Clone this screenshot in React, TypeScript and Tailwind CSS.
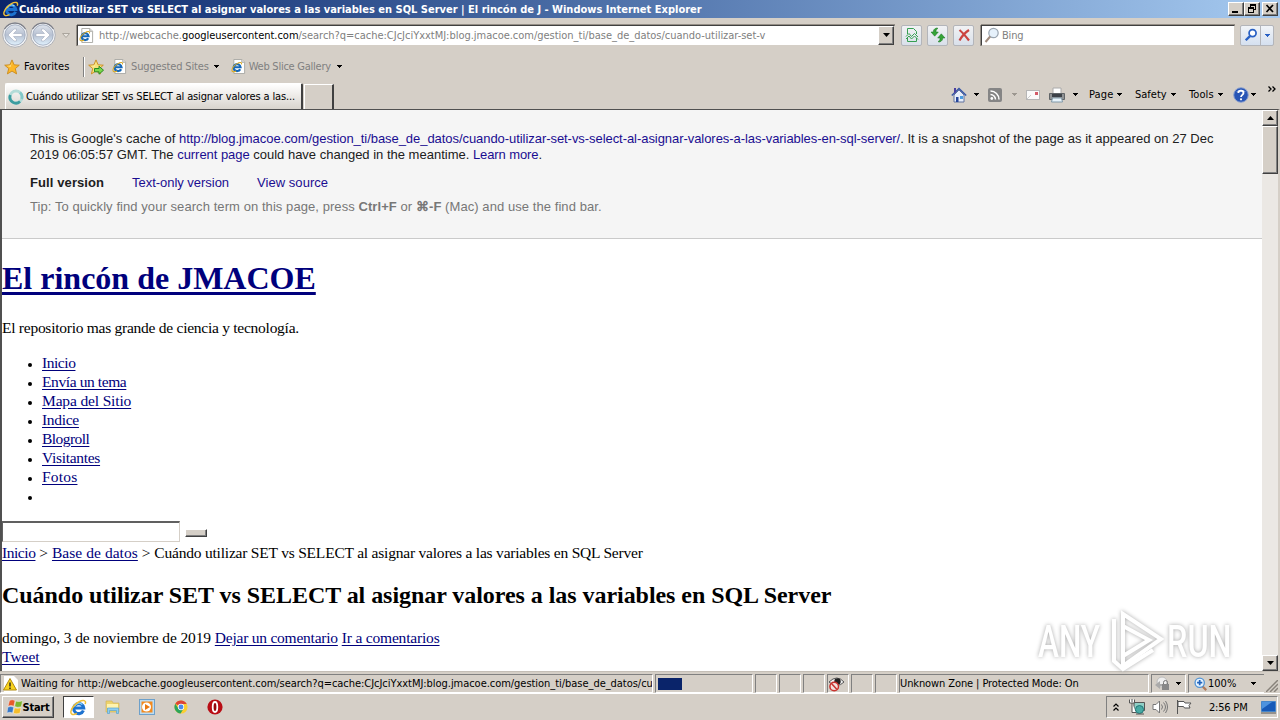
import type { ReactNode } from "react";

const menu = [
  { label: "Inicio", tracking: "tracking-[-0.45px]" },
  { label: "Envía un tema", tracking: "tracking-[-0.4px]" },
  { label: "Mapa del Sitio", tracking: "tracking-[-0.15px]" },
  { label: "Indice", tracking: "tracking-[-0.3px]" },
  { label: "Blogroll", tracking: "tracking-[-0.54px]" },
  { label: "Visitantes", tracking: "tracking-[-0.3px]" },
  { label: "Fotos", tracking: "tracking-[0.2px]" },
  { label: "", tracking: "" },
];

function IeLogo({ className }: { className: string }) {
  return (
    <svg viewBox="0 0 16 16" className={className}>
      <path d="M12.6 10.8A4.700 4.700 0 1 1 12.900 8.500H5" fill="none" stroke="#1d72cf" strokeWidth="2.900" />
      <path d="M4.2 7A4.300 4.300 0 0 1 11.500 5.300" fill="none" stroke="#8ad4fb" strokeWidth="1.300" />
      <path d="M14.3 4.800C15.600 1.300 12.500.3 8.500 2.600 5 4.600 1.900 8.200 1 11.200.2 14.200 2.500 15.800 6.500 13.600" fill="none" stroke="#f0bf35" strokeWidth="1.400" />
    </svg>
  );
}

function PageIcon({ className }: { className: string }) {
  return (
    <svg viewBox="0 0 16 16" className={className}>
      <path d="M3 .5h8.500l3 3v12H3z" fill="#fff" stroke="#a9a9a4" />
      <path d="M11.500.5v3h3" fill="#e4e4e4" stroke="#a9a9a4" />
      <path d="M9.800 10.900A3.700 3.700 0 1 1 10.200 8.800H4" fill="none" stroke="#1668b8" strokeWidth="2.300" />
      <path d="M11.200 5.700C11.800 3.300 9.200 3.200 6.500 5 3.500 7 1 10 1 12c0 2 2 2.200 4.500.8" fill="none" stroke="#dba922" strokeWidth="1.100" />
    </svg>
  );
}

function Star({ arrow }: { arrow?: boolean }) {
  return (
    <svg viewBox="0 0 16 16" className="size-4 shrink-0">
      <path d="M8 .9l2.100 4.900 5.200.4-4 3.400 1.300 5.300L8 12.100l-4.600 2.800 1.300-5.300-4-3.400 5.200-.4z" fill={arrow ? "#f7e27a" : "#fdb728"} stroke="#c98a1c" strokeWidth=".9" />
      <path d="M8 2.600L6.600 6.500l-3.800.5 3.800.800z" fill="#fff3a8" />
      {arrow && <path d="M6.500 9.500h4.500V7.200l4.500 4-4.500 4v-2.400H6.500z" fill="#7bd84c" stroke="#2b8a22" />}
    </svg>
  );
}

function Caret({ className = "fill-black" }: { className?: string }) {
  return (
    <svg viewBox="0 0 5 3" className={`w-[5px] h-[3px] shrink-0 ${className}`} shapeRendering="crispEdges">
      <path d="M0 0h5v1H4v1H3v1H2V2H1V1H0z" />
    </svg>
  );
}

function NavArrow({ back }: { back?: boolean }) {
  return (
    <svg viewBox="0 0 26 26" className="size-[26px] shrink-0">
      <defs>
        <linearGradient id="nav" x2="0" y2="1">
          <stop offset="0" stopColor="#dfe4ec" />
          <stop offset=".5" stopColor="#b7c1d2" />
          <stop offset="1" stopColor="#e0f1fd" />
        </linearGradient>
      </defs>
      <circle cx="13" cy="13" r="12.300" fill="#f1f3f6" stroke="#aeb0b6" strokeWidth="1" />
      <path d="M2.500 7A12.300 12.300 0 0 1 23.500 7" fill="none" stroke="#7b7d86" strokeWidth="1.200" />
      <circle cx="13" cy="13" r="10.200" fill="url(#nav)" stroke="#9aa6ba" strokeWidth=".8" />
      <path
        d="M6 13l6-6h2.500v1.500L11.500 11.500H20v3h-8.500l3 3V19H12z"
        fill="#fff"
        stroke="#98a3b6"
        strokeWidth=".5"
        transform={back ? undefined : "rotate(180 13 13)"}
      />
    </svg>
  );
}

function ToolButton({ children }: { children: ReactNode }) {
  return (
    <div className="w-[21px] h-[21px] mr-[5px] shrink-0 rounded-[2px] border border-[#b3b5ba] bg-linear-to-b from-[#f1f2f4] to-[#d9e0ea] flex items-center justify-center">
      {children}
    </div>
  );
}

function WinButton({ children, className = "" }: { children?: ReactNode; className?: string }) {
  return (
    <div className={`shrink-0 bg-[#d5cfc7] border border-t-white border-l-white border-r-[#404040] border-b-[#404040] shadow-[inset_-1px_-1px_#808080] flex items-center justify-center ${className}`}>
      {children}
    </div>
  );
}

function Panel({ children, className }: { children?: ReactNode; className: string }) {
  return (
    <div className={`h-[19px] shrink-0 border border-t-[#808080] border-l-[#808080] border-r-white border-b-white flex items-center overflow-hidden whitespace-nowrap ${className}`}>
      {children}
    </div>
  );
}

function TitleBar() {
  return (
    <div className="h-[18px] flex items-center bg-linear-to-r from-[#0a246a] to-[#a6caf0] text-white font-bold">
      <IeLogo className="size-4 ml-[3px]" />
      <span>
        Cuándo utilizar SET vs SELECT al asignar valores a las variables en SQL Server | El rincón de J - Windows Internet Explorer
      </span>
      <div className="ml-auto mr-[2px] flex">
        <WinButton className="w-4 h-[14px]">
          <svg viewBox="0 0 14 12" className="w-[14px] h-3"><path d="M3 8h6v2H3z" /></svg>
        </WinButton>
        <WinButton className="w-4 h-[14px]">
          <svg viewBox="0 0 14 12" className="w-[14px] h-3" shapeRendering="crispEdges">
            <path d="M5 1h6v6H9V6h1V3H6v1H5zM3 4h6v6H3zm1 2v3h4V6z" fillRule="evenodd" />
          </svg>
        </WinButton>
        <WinButton className="w-4 h-[14px] ml-[2px]">
          <svg viewBox="0 0 14 12" className="w-[14px] h-3"><path d="M3.500 2l6.500 7M10 2L3.500 9" stroke="#000" strokeWidth="1.700" /></svg>
        </WinButton>
      </div>
    </div>
  );
}

function AddressRow() {
  return (
    <div className="h-[34px] flex items-center pl-[2px]">
      <NavArrow back />
      <div className="w-[2px]" />
      <NavArrow />
      <div className="w-[21px] pl-[6px]">
        <svg viewBox="0 0 8 5" className="w-2 h-[5px]"><path d="M.5.5h7L4 4.500z" fill="#e8e4de" stroke="#aaa59d" /></svg>
      </div>
      <div className="w-[818px] h-[21px] mr-[6px] bg-white border border-t-[#404040] border-l-[#404040] border-r-[#d5cfc7] border-b-[#d5cfc7] shadow-[0_-1px_#948e86,-1px_0_#948e86] flex items-center whitespace-nowrap">
        <PageIcon className="size-[15px] ml-px" />
        <span className="ml-[5px] text-[#808080] tracking-[-0.02px]">
          http://webcache.<span className="text-black">googleusercontent.com</span>/search?q=cache:CJcJciYxxtMJ:blog.jmacoe.com/gestion_ti/base_de_datos/cuando-utilizar-set-v
        </span>
        <WinButton className="w-4 h-[19px] ml-auto"><svg viewBox="0 0 7 4" className="w-[7px] h-1"><path d="M0 0h7L3.500 4z" /></svg></WinButton>
      </div>
      <ToolButton>
        <svg viewBox="0 0 16 16" className="size-4" fill="none" stroke="#36a052">
          <path d="M3.500 7V1.500h6l3 3V7M3.500 11v3.500h9V11" />
          <path d="M2 9.500l3-3 2.500 3 3-3 3.500 3.500M2 12l3-3 2.500 3 3-3 3.500 3.500" />
        </svg>
      </ToolButton>
      <ToolButton>
        <svg viewBox="0 0 16 16" className="size-4" fill="#36a338" stroke="#187722" strokeWidth=".5">
          <path d="M6.500 1C3.800 1.800 3.300 3.500 3.300 5H1l3.700 4.200L8.300 5H6c0-1.500 0-2.500 2-3.700z" />
          <path d="M9.500 15c2.700-.8 3.200-2.500 3.200-4H15l-3.700-4.200L7.700 11H10c0 1.500 0 2.500-2 3.700z" />
        </svg>
      </ToolButton>
      <ToolButton>
        <svg viewBox="0 0 16 16" className="size-4"><path d="M3.500 3c3 2.500 6 6 9.500 10.500M13 3C9 5.500 6 9 3.500 13.500" fill="none" stroke="#cb4340" strokeWidth="2.200" /></svg>
      </ToolButton>
      <div className="w-[254px] h-[21px] ml-[2px] bg-white border border-t-[#404040] border-l-[#404040] border-r-[#d5cfc7] border-b-[#d5cfc7] shadow-[0_-1px_#948e86,-1px_0_#948e86] flex items-center text-[#808080]">
        <svg viewBox="0 0 16 16" className="size-4 ml-[2px]">
          <circle cx="9.500" cy="6" r="4.700" fill="#e6f1fb" stroke="#9aa5b0" strokeWidth="1.200" />
          <path d="M6.200 9.500L1.500 15" stroke="#a08b7d" strokeWidth="2" />
        </svg>
        <span className="ml-[2px] tracking-[-0.2px]">Bing</span>
      </div>
      <div className="h-[21px] ml-[5px] flex rounded-[2px] border border-[#b3b5ba] bg-linear-to-b from-[#f1f4f8] to-[#d5e0ef]">
        <div className="w-5 border-r border-[#b3b5ba] flex items-center justify-center">
          <svg viewBox="0 0 16 16" className="size-[14px]">
            <circle cx="9.800" cy="5.800" r="4" fill="#fff" stroke="#2860c4" strokeWidth="2" />
            <path d="M6.800 9.200L2 14" stroke="#2860c4" strokeWidth="2.700" />
          </svg>
        </div>
        <div className="w-3 flex items-center justify-center"><Caret className="fill-[#2860c4]" /></div>
      </div>
    </div>
  );
}

function FavoritesRow() {
  return (
    <div className="h-[29px] flex items-center pl-1 text-[#808080]">
      <Star />
      <span className="ml-1 w-[59px] text-black tracking-[0.1px]">Favorites</span>
      <div className="w-[2px] h-5 mr-[3px] bg-white border-l border-[#808080]" />
      <Star arrow />
      <PageIcon className="size-[15px] ml-[8px]" />
      <span className="ml-[4px] mr-[5px] tracking-[-0.15px]">Suggested Sites</span>
      <Caret />
      <PageIcon className="size-[15px] ml-[12px]" />
      <span className="ml-[3px] mr-[6px] tracking-[-0.25px]">Web Slice Gallery</span>
      <Caret />
    </div>
  );
}

function TabRow() {
  return (
    <div className="h-7 flex">
      <div className="w-[298px] h-[26px] mt-[2px] ml-[5px] pl-[2px] rounded-t-[2px] bg-linear-to-b from-white to-[#d9d4cd] border-t border-l border-white border-r-2 border-r-[#404040] flex items-center whitespace-nowrap">
        <svg viewBox="0 0 16 16" className="size-4 shrink-0" fill="none" strokeWidth="2.800">
          <circle cx="8" cy="8" r="6" stroke="#b3dcd8" />
          <path d="M2.300 6A6 6 0 0 0 12 12.500" stroke="#3c9da0" />
          <path d="M12 3.500A6 6 0 0 1 13.700 10" stroke="#82c8c8" />
        </svg>
        <span className="ml-[2px] tracking-[-0.15px]">Cuándo utilizar SET vs SELECT al asignar valores a las...</span>
      </div>
      <div className="w-[30px] h-[25px] mt-[3px] ml-[1px] border-t border-l border-white border-r-2 border-r-[#404040]" />
      <div className="ml-auto flex items-center h-[27px] pr-1">
        <svg viewBox="0 0 16 16" className="size-4">
          <path d="M3 8v7h10V8L8 3z" fill="#e8eefa" stroke="#6375a0" />
          <path d="M.8 8.500L8 1.500l7.200 7" fill="none" stroke="#3555a5" strokeWidth="1.500" />
          <path d="M3 1h2v4L3 6.500z" fill="#4a3f9f" /><path d="M5 10h2.500v5H5z" fill="#25459a" /><path d="M9 9h3v3H9z" fill="#4d9de0" />
        </svg>
        <div className="w-[21px] pl-[7px]"><Caret /></div>
        <svg viewBox="0 0 14 14" className="size-[14px]">
          <rect width="14" height="14" rx="2" fill="#858585" />
          <path d="M2.500 6.500a5 5 0 0 1 5 5M2.500 3a8.500 8.500 0 0 1 8.500 8.500" fill="none" stroke="#fff" strokeWidth="1.500" /><circle cx="3.800" cy="10.500" r="1.400" fill="#fff" />
        </svg>
        <div className="w-[24px] pl-[10px]"><Caret className="fill-[#9c9790]" /></div>
        <svg viewBox="0 0 14 10" className="w-[14px] h-[10px]"><rect x=".5" y=".5" width="13" height="9" fill="#fafafa" stroke="#b6b6b6" /><path d="M9 2h3v3H9z" fill="#d35b68" /><path d="M1 9l4-4" stroke="#ccc" /></svg>
        <svg viewBox="0 0 16 16" className="size-4 ml-[9px]">
          <path d="M4 1h8v6H4z" fill="#fff" stroke="#aaa" />
          <path d="M.5 6.500h15v6H.5z" fill="#8f9294" stroke="#606467" /><path d="M3 7h10v3H3z" fill="#3d4248" /><path d="M3.500 11h9l1 4h-11z" fill="#e8f4fb" stroke="#8199a8" />
        </svg>
        <div className="w-[24px] pl-[8px]"><Caret /></div>
        <span className="w-7 tracking-[0.15px]">Page</span><Caret />
        <span className="w-9 ml-[13px]">Safety</span><Caret />
        <span className="w-[29px] ml-[13px] tracking-[0.1px]">Tools</span><Caret />
        <svg viewBox="0 0 16 16" className="size-4 ml-[10px]">
          <circle cx="8" cy="8" r="7.300" fill="#2855b5" stroke="#8fa3cf" /><path d="M3 5a6 5 0 0 1 10 0z" fill="#6f97dd" />
          <path d="M5.300 6C5.500 2.800 10.500 2.800 10.500 6 10.500 7.700 8 8 8 10" fill="none" stroke="#fff" strokeWidth="1.800" /><circle cx="8" cy="12.300" r="1.100" fill="#fff" />
        </svg>
        <div className="w-[19px] pl-[2px]"><Caret /></div>
        <svg viewBox="0 0 8 6" className="w-2 h-[6px] mb-3" fill="none" stroke="#000" strokeWidth="1.300"><path d="M.5.5L3 3 .5 5.500M4.500.5L7 3 4.500 5.500" /></svg>
      </div>
    </div>
  );
}

function ScrollBar() {
  return (
    <div className="w-4 shrink-0 flex flex-col bg-[#ebe8e4]">
      <WinButton className="h-4"><svg viewBox="0 0 7 4" className="w-[7px] h-1"><path d="M0 4h7L3.500 0z" /></svg></WinButton>
      <WinButton className="h-12" />
      <WinButton className="h-4 mt-auto"><svg viewBox="0 0 7 4" className="w-[7px] h-1"><path d="M0 0h7L3.500 4z" /></svg></WinButton>
    </div>
  );
}

function CacheHeader() {
  return (
    <div className="h-[129px] pt-[21px] pl-7 bg-[#f5f5f5] border-b border-[#cacaca] font-['Liberation_Sans',Arial,sans-serif] text-[13px] leading-4 text-[#202020] whitespace-nowrap">
      <p className="tracking-[0.02px]">
        This is Google's cache of <a className="text-[#1a0d91] tracking-[-0.056px]">http://blog.jmacoe.com/gestion_ti/base_de_datos/cuando-utilizar-set-vs-select-al-asignar-valores-a-las-variables-en-sql-server/</a>. It is a snapshot of the page as it appeared on 27 Dec
      </p>
      <p>
        2019 06:05:57 GMT. The <a className="text-[#1a0d91] tracking-[-0.05px]">current page</a> could have changed in the meantime. <a className="text-[#1a0d91] tracking-[-0.1px]">Learn more</a>.
      </p>
      <div className="mt-3 flex text-[#1a0d91]">
        <b className="w-[102px] text-[#202020] tracking-[0.1px]">Full version</b>
        <a className="w-[125px] tracking-[-0.03px]">Text-only version</a>
        <a className="tracking-[0.05px]">View source</a>
      </div>
      <p className="mt-2 tracking-[0.07px] text-[#777]">
        Tip: To quickly find your search term on this page, press <b>Ctrl+F</b> or <b>⌘-F</b> (Mac) and use the find bar.
      </p>
    </div>
  );
}

function Watermark() {
  return (
    <div className="absolute left-[1036px] top-[500px] flex items-center text-white text-[45px] leading-none font-medium font-['Roboto',sans-serif] drop-shadow-[0_0_2px_#a8a8a8]">
      <span className="scale-x-[0.7] origin-left w-[66px]">ANY</span>
      <svg viewBox="0 0 58 62" className="w-[58px] h-[62px] ml-[4px]" fill="none" stroke="#fff" strokeWidth="4">
        <path d="M15 4l38 25-38 27zM15 16l26 14-26 16" />
        <path d="M6 9v42l9 8 30-19" />
      </svg>
      <span className="scale-x-[0.72] origin-left w-[66px] ml-[1px]">RUN</span>
    </div>
  );
}

function Link({ children, className = "" }: { children: ReactNode; className?: string }) {
  return <a className={`text-[#00007c] underline underline-offset-2 ${className}`}>{children}</a>;
}

function PageContent() {
  return (
    <div className="flex-1 min-w-0 overflow-hidden bg-white font-['Liberation_Serif','Times_New_Roman',serif] text-[15.5px] leading-[19px] text-black whitespace-nowrap">
      <CacheHeader />
      <h1 className="mt-5 text-[32px] leading-[38px] font-bold text-[#00007c] underline decoration-[3px] underline-offset-[3px]">El rincón de JMACOE</h1>
      <p className="mt-[21px] tracking-[-0.26px]">El repositorio mas grande de ciencia y tecnología.</p>
      <ul className="mt-4 pl-10 list-disc marker:text-[12px]">
        {menu.map((item, i) => (
          <li key={i} className="h-[19px]"><Link className={item.tracking}>{item.label}</Link></li>
        ))}
      </ul>
      <div className="mt-[15px] h-[23px] flex items-center">
        <div className="w-[178px] h-[21px] border border-t-[#606060] border-l-[#606060] border-t-2 border-r-[#d5cfc7] border-b-[#d5cfc7]" />
        <WinButton className="w-[22px] h-2 ml-[5px] mt-[2px]" />
      </div>
      <p>
        <Link className="tracking-[-0.45px]">Inicio</Link> &gt; <Link className="tracking-[0.05px]">Base de datos</Link> &gt; <span className="tracking-[-0.21px]">Cuándo utilizar SET vs SELECT al asignar valores a las variables en SQL Server</span>
      </p>
      <h2 className="mt-[19px] text-2xl leading-[28px] font-bold tracking-[-0.05px]">Cuándo utilizar SET vs SELECT al asignar valores a las variables en SQL Server</h2>
      <p className="mt-[19px]">
        <span className="tracking-[-0.12px]">domingo, 3 de noviembre de 2019</span> <Link className="tracking-[-0.23px]">Dejar un comentario</Link> <Link className="tracking-[-0.18px]">Ir a comentarios</Link>
      </p>
      <p><Link>Tweet</Link></p>
    </div>
  );
}

function StatusBar() {
  return (
    <div className="h-[22px] shrink-0 pt-[2px] flex gap-[2px] border-t border-[#c4beb6]">
      <Panel className="w-[653px] pl-[2px]">
        <svg viewBox="0 0 16 16" className="size-4 shrink-0">
          <path d="M1 0h10l4 4v12H1z" fill="#fff" /><path d="M7 2.500l6.500 11.500H.5z" fill="#f8d31e" stroke="#b18a11" /><path d="M7 6.500v4M7 11.500v1.500" stroke="#222" strokeWidth="1.400" />
        </svg>
        <span className="ml-[2px] tracking-[-0.04px]">Waiting for http://webcache.googleusercontent.com/search?q=cache:CJcJciYxxtMJ:blog.jmacoe.com/gestion_ti/base_de_datos/cu</span>
      </Panel>
      <Panel className="w-[98px] pl-[2px]"><div className="w-6 h-3 bg-[#0a246a]" /></Panel>
      <Panel className="w-[22px]" />
      <Panel className="w-[22px]" />
      <Panel className="w-[22px]" />
      <Panel className="w-[22px]">
        <svg viewBox="0 0 18 16" className="w-[18px] h-4 shrink-0">
          <path d="M1 6q8-8 15 0-7 7-15 0z" fill="#f4f4f4" stroke="#555" /><circle cx="9.500" cy="5.500" r="3.200" fill="#222" />
          <circle cx="6.200" cy="10.500" r="4.300" fill="#f2e0dd" stroke="#c9322e" strokeWidth="1.500" /><path d="M3.500 7.500l5.500 6" stroke="#c9322e" strokeWidth="1.500" />
        </svg>
      </Panel>
      <Panel className="w-[22px]" />
      <Panel className="w-[22px]" />
      <Panel className="w-[250px] tracking-[-0.1px]">Unknown Zone | Protected Mode: On</Panel>
      <Panel className="w-[35px] pl-[3px]">
        <svg viewBox="0 0 16 16" className="size-4 shrink-0"><circle cx="7" cy="6" r="5" fill="#eee" stroke="#bbb" /><path d="M0 9l5-4v3h4v2H5v3z" fill="#aaa" /><path d="M7 8h7v6H7z" fill="#888" /><path d="M8.500 8V6.500a2 2 0 0 1 4 0V8" fill="none" stroke="#777" /></svg>
        <div className="ml-[5px]"><Caret /></div>
      </Panel>
      <Panel className="w-[76px] pl-[5px] border-r-0">
        <svg viewBox="0 0 16 16" className="size-[14px] shrink-0"><path d="M9 10l5 5" stroke="#b27b5c" strokeWidth="2.500" /><circle cx="6.500" cy="6.500" r="5.300" fill="#e8f4ff" stroke="#5193d4" strokeWidth="1.500" /><path d="M6.500 3.500v6M3.500 6.500h6" stroke="#2264bd" strokeWidth="2" /></svg>
        <span className="mr-[15px]">100%</span>
        <Caret />
      </Panel>
      <svg viewBox="0 0 12 12" className="w-3 h-3 mt-[6px] shrink-0"><path d="M0 12L12 0M4 12l8-8M8 12l4-4" stroke="#88827b" strokeWidth="1.500" /></svg>
    </div>
  );
}

function TaskBar() {
  return (
    <div className="h-[27px] shrink-0 border-t border-white flex items-center">
      <WinButton className="w-[52px] h-[22px] ml-[2px] mr-[9px]">
        <svg viewBox="0 0 16 16" className="size-4 shrink-0" stroke="#fff" strokeWidth=".4">
          <path d="M2.500 1.500Q5 0 8 1.500L6.900 7.200Q4 5.700 1 7.200z" fill="#e75a2b" /><path d="M8.800 2Q11.500 3.300 15.500 1.700L14.300 7.700Q10.500 9 7.700 7.500z" fill="#7cb52f" />
          <path d="M.8 8.200Q3.500 6.700 6.700 8.200L5.500 14Q3 12.500 0 14z" fill="#3979c8" /><path d="M7.500 8.700Q10 10 14 8.700L13 14.200Q9 15.500 6.300 14.200z" fill="#f5bd2b" />
        </svg>
        <b className="tracking-[-0.25px]">Start</b>
      </WinButton>
      <div className="w-[31px] h-[22px] border border-t-[#404040] border-l-[#404040] border-white bg-white flex items-center justify-center">
        <IeLogo className="size-[17px]" />
      </div>
      <svg viewBox="0 0 16 16" className="size-4 ml-[11px]">
        <path d="M1 2h6l1 2h6v9H1z" fill="#edd36d" stroke="#d0b050" strokeWidth=".6" /><path d="M2 5h11v4H2z" fill="#fff3ae" /><path d="M2.500 9h11v5.500h-2V11.500h-7v3h-2z" fill="#8ccdf1" stroke="#5aa3cf" strokeWidth=".7" />
      </svg>
      <svg viewBox="0 0 16 16" className="size-4 ml-[18px]">
        <rect x=".5" y=".5" width="15" height="15" fill="#bcdcf2" stroke="#6da0ca" /><rect x="2.500" y="2.500" width="11" height="11" fill="#f38a1e" /><circle cx="7.500" cy="8" r="4.500" fill="#fff" /><path d="M6 5l5 3-5 3z" fill="#e97912" />
      </svg>
      <svg viewBox="0 0 16 16" className="size-[14px] ml-[19px]">
        <circle cx="8" cy="8" r="7.500" fill="#fbcf31" /><path d="M8 8L1.500 4.200A7.500 7.500 0 0 1 14.500 4.500L8 4.500z" fill="#dc4437" /><path d="M1.500 4.200A7.500 7.500 0 0 0 7.500 15.500L11 9.800 5 9.800z" fill="#2ca45b" /><circle cx="8" cy="8" r="3.600" fill="#fff" /><circle cx="8" cy="8" r="2.800" fill="#4b8bea" />
      </svg>
      <svg viewBox="0 0 16 16" className="size-4 ml-[19px]"><circle cx="8" cy="8" r="7.600" fill="#b90d15" /><ellipse cx="8" cy="8" rx="2.300" ry="5" fill="#96080d" stroke="#fff" strokeWidth="1.800" /></svg>
      <div className="w-[172px] h-[22px] ml-auto mr-[2px] pl-[6px] pr-px flex items-center border border-t-[#808080] border-l-[#808080] border-white">
        <svg viewBox="0 0 6 8" className="w-[6px] h-2" fill="none" stroke="#000" strokeWidth="1.200"><path d="M.5 3.500L3 1l2.500 2.500M.5 7.500L3 5l2.500 2.500" /></svg>
        <svg viewBox="0 0 16 16" className="size-4 ml-[10px]"><path d="M5 3.500h10.500v8H5z" fill="#8fcfc6" stroke="#555" /><path d="M.5.5v3.500h5V.5M3 0v3M3 4v9.500h4" fill="#fff" stroke="#555" /><circle cx="10.500" cy="10.500" r="4" fill="#48aaa4" stroke="#277" /><path d="M7 15h8" stroke="#555" /></svg>
        <svg viewBox="0 0 16 16" className="size-4 ml-[7px]" fill="none" stroke="#777"><path d="M1 5.500h3L7.500 2v12L4 10.500H1z" fill="#fff" /><path d="M9.500 5.500q2 2.500 0 5M11.500 3.500q4 4.500 0 9M13.500 2q4 6 0 12" /></svg>
        <svg viewBox="0 0 16 16" className="size-4 ml-[8px]" fill="#fff" stroke="#555"><path d="M1.500 1v14M2 2.500h6l1 1.500h6l-2 2.500 1 2.500H8.500l-1-1.500H2z" /></svg>
        <span className="ml-[17px] tracking-[-0.2px]">2:56 PM</span>
        <svg viewBox="0 0 15 13" className="w-[15px] h-[13px] ml-auto"><path d="M.5.5h14v10H.5z" fill="#175ab8" stroke="#4686c9" /><path d="M1 1h10L1 8z" fill="#4d93df" /><path d="M0 12h15" stroke="#555" /></svg>
      </div>
    </div>
  );
}

export default function App() {
  return (
    <div className="w-[1280px] h-[720px] overflow-hidden flex flex-col bg-[#d5cfc7] font-['DejaVu_Sans_Condensed','DejaVu_Sans',Tahoma,sans-serif] text-[11px] leading-[13px] text-black whitespace-nowrap">
      <TitleBar />
      <AddressRow />
      <FavoritesRow />
      <TabRow />
      <div className="relative h-[562px] flex border-t border-l-2 border-r-2 border-[#505050] border-r-[#d5cfc7]">
        <PageContent />
        <ScrollBar />
        <Watermark />
      </div>
      <StatusBar />
      <TaskBar />
    </div>
  );
}
